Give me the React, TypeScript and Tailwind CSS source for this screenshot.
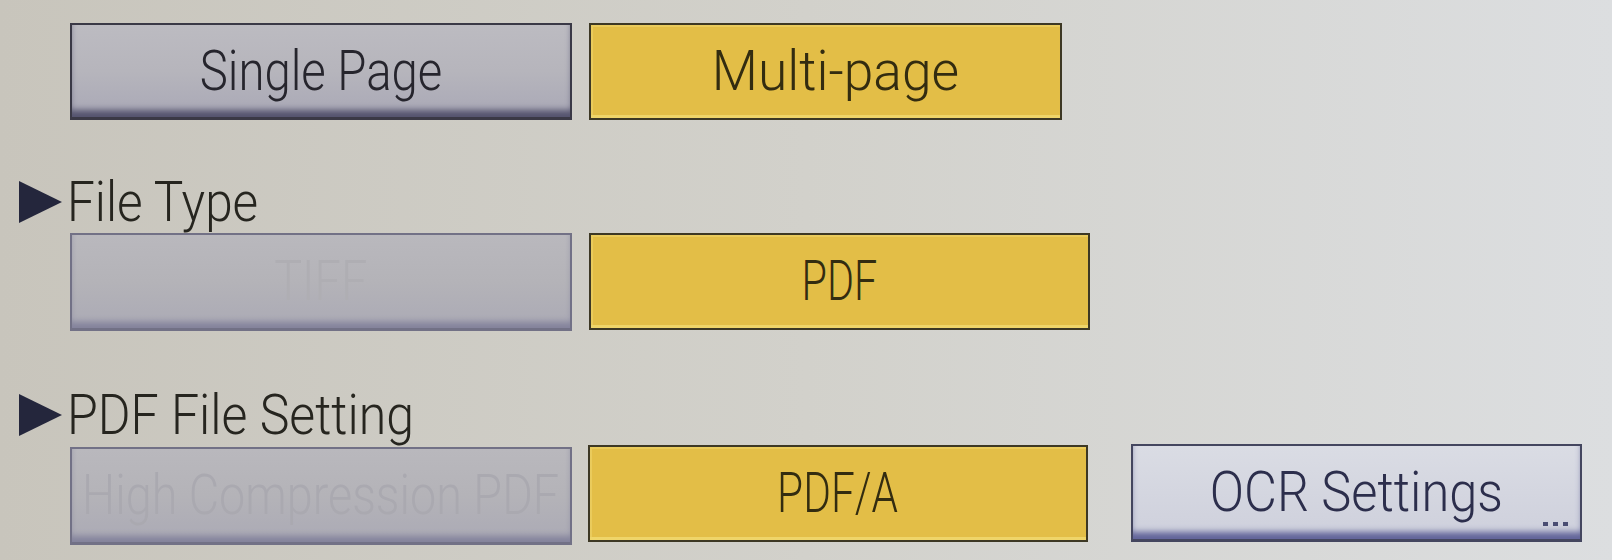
import React from "react";

const font = { fontFamily: 'Roboto, "Liberation Sans", Arial, sans-serif' };

function Tri() {
  return (
    <svg width="44" height="44" viewBox="0 0 44 44" className="shrink-0">
      <polygon points="1,1 44,22 1,43" fill="#24263c" />
    </svg>
  );
}

function GrayBtn({ label, w, sx }: { label: string; w: string; sx: string }) {
  return (
    <div
      className={`${w} h-[97px] shrink-0 flex items-center justify-center border-2 border-b-[3px] border-[#3a3946] bg-linear-to-b from-[#bcbbc1] via-[#b6b5bc] to-[#a9a8b6] shadow-[inset_0_-9px_6px_-2px_#55546f]`}
    >
      <span className={`inline-block text-[55px] leading-[55px] font-light text-[#26252d] ${sx} origin-center whitespace-nowrap`}>{label}</span>
    </div>
  );
}

function DisabledBtn({ label, w, mt, color }: { label: string; w: string; mt: string; color: string }) {
  return (
    <div
      className={`${w} ${mt} h-[98px] shrink-0 flex items-center justify-center border-2 border-b-[3px] border-[#727186] bg-linear-to-b from-[#b9b8bd] via-[#b4b3b8] to-[#abaab5] shadow-[inset_0_-8px_6px_-2px_#84839c]`}
    >
      <span className={`inline-block text-[55px] leading-[55px] font-light ${color} scale-x-[0.85] origin-center whitespace-nowrap`}>{label}</span>
    </div>
  );
}

function YellowBtn({ label, w, sx }: { label: string; w: string; sx: string }) {
  return (
    <div
      className={`${w} h-[97px] shrink-0 flex items-center justify-center border-2 border-[#3d3824] bg-[#e3be47] shadow-[inset_0_-3px_0_#efd569,inset_2px_2px_0_#eacb5c]`}
    >
      <span className={`inline-block text-[55px] leading-[55px] font-light text-[#332c10] ${sx} origin-center whitespace-nowrap`}>{label}</span>
    </div>
  );
}

function Label({ text, sx }: { text: string; sx: string }) {
  return (
    <div className="flex items-center pl-[18px] h-[54px]">
      <Tri />
      <span className={`ml-[5px] inline-block text-[55px] leading-[54px] font-light text-[#26251f] ${sx} origin-left whitespace-nowrap`}>{text}</span>
    </div>
  );
}

export default function App() {
  return (
    <div
      style={font}
      className="w-[1612px] h-[560px] overflow-hidden bg-linear-to-r from-[#c8c5bc] via-[#d2d1cb] to-[#dcdee0] flex flex-col pt-[23px]"
    >
      <div className="flex items-start gap-[17px] pl-[70px]">
        <GrayBtn label="Single Page" w="w-[502px]" sx="scale-x-[0.86]" />
        <div className="pl-[0px]">
          <YellowBtn label="Multi-page" w="w-[473px]" sx="scale-x-[0.97] translate-x-[10px]" />
        </div>
      </div>

      <div className="mt-[55px] mb-[4px]">
        <Label text="File Type" sx="scale-x-[0.9]" />
      </div>

      <div className="flex items-start gap-[17px] pl-[70px]">
        <DisabledBtn label="TIFF" w="w-[502px]" mt="mt-0" color="text-[#afaeb3]" />
        <YellowBtn label="PDF" w="w-[501px]" sx="scale-x-[0.75]" />
      </div>

      <div className="mt-[57px] mb-[3px]">
        <Label text="PDF File Setting" sx="scale-x-[0.91]" />
      </div>

      <div className="flex items-start pl-[70px]">
        <DisabledBtn label="High Compression PDF" w="w-[502px]" mt="mt-[2px]" color="text-[#aaa9b0]" />
        <div className="ml-[16px]">
          <YellowBtn label="PDF/A" w="w-[500px]" sx="scale-x-[0.77]" />
        </div>
        <div className="ml-[43px] -mt-[1px] relative w-[451px] h-[98px] shrink-0 flex items-center justify-center border-2 border-b-[3px] border-[#44465f] bg-linear-to-b from-[#dadce4] to-[#ced0dc] shadow-[inset_0_-9px_6px_-2px_#62649a]">
          <span className="inline-block text-[55px] leading-[55px] font-light text-[#2c2e4c] scale-x-[0.92] origin-center whitespace-nowrap">OCR Settings</span>
          <div className="absolute right-[12px] bottom-[13px] flex gap-[5px]">
            <div className="w-[5px] h-[4px] bg-[#4a4d72]" />
            <div className="w-[5px] h-[4px] bg-[#4a4d72]" />
            <div className="w-[5px] h-[4px] bg-[#4a4d72]" />
          </div>
        </div>
      </div>
    </div>
  );
}
